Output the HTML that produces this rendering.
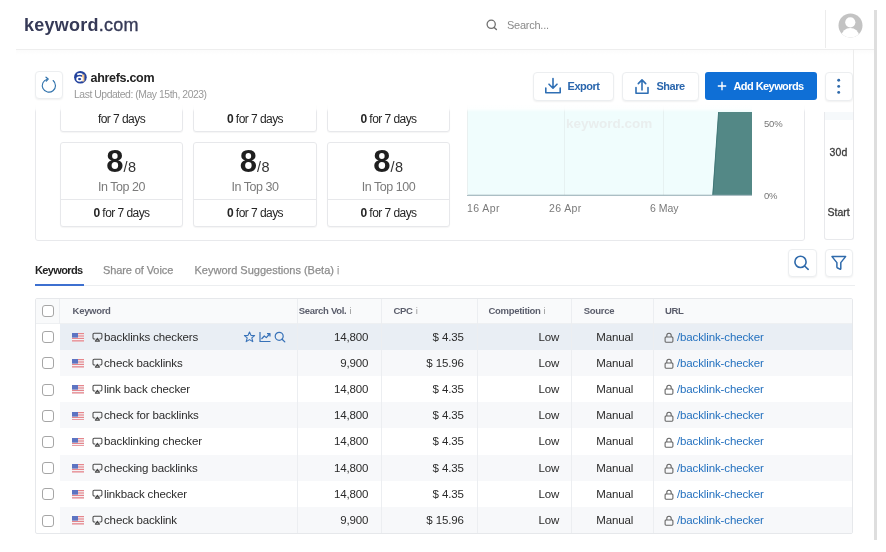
<!DOCTYPE html>
<html><head><meta charset="utf-8">
<style>
*{box-sizing:border-box;margin:0;padding:0}
html,body{width:886px;height:552px;overflow:hidden;background:#fff;font-family:"Liberation Sans",sans-serif;color:#333}
.a{position:absolute}
.t{position:absolute;white-space:nowrap;line-height:1}
/* header */
#logo{left:24px;top:16px;font-size:18px;color:#363a57;letter-spacing:0.25px}
#logo b{font-weight:700}
#logo span{-webkit-text-stroke:0.35px #363a57}
#search{left:507px;top:20px;font-size:11px;color:#8a8a8a;letter-spacing:-0.25px}
/* cards */
.card{position:absolute;width:123px;border:1px solid #e7e8eb;border-radius:3px;background:#fff;box-shadow:0 1px 1px rgba(0,0,0,0.04)}
.card .top{position:absolute;left:0;right:0;top:0;height:57px;border-bottom:1px solid #e7e8eb}
.big{position:absolute;left:0;right:0;text-align:center;top:3px;white-space:nowrap;line-height:1}
.big b{font-size:31px;font-weight:700;color:#1f1f1f}
.big span{font-size:14.5px;color:#333;letter-spacing:0.6px}
.lbl{position:absolute;left:0;right:0;top:37.5px;text-align:center;font-size:12.5px;color:#7b7b7b;letter-spacing:-0.45px;line-height:1}
.days{position:absolute;left:0;right:0;text-align:center;font-size:12px;color:#262626;letter-spacing:-0.55px;line-height:1}
.days b{font-weight:700}
.btn{position:absolute;border:1px solid #eceef0;border-radius:4px;background:#fff;box-shadow:0 1px 2px rgba(0,0,0,0.06)}
.th{position:absolute;top:0;height:25px;font-size:9.5px;font-weight:700;color:#5a5d6b;line-height:24px;white-space:nowrap;letter-spacing:-0.3px}
.th i{font-style:normal;font-weight:400;color:#9a9a9a;margin-left:3px}
.row{position:absolute;left:0;width:817px;height:26px}
.cell{position:absolute;top:0;height:26px;line-height:27.5px;font-size:11.5px;color:#2b2b2b;white-space:nowrap;letter-spacing:-0.13px}
.r{text-align:right}
.cb{position:absolute;left:6px;width:12px;height:12px;border:1.3px solid #a6a6a6;border-radius:3px;background:#fff}
.url{color:#2471bf}
.vd{position:absolute;top:0;width:1px;background:#eceef1}
</style></head><body><div id="wrap" style="position:absolute;left:0;top:0;width:886px;height:552px;overflow:hidden;filter:blur(0.35px)">

<!-- HEADER -->
<div class="t" id="logo"><b>keyword</b><span>.com</span></div>
<svg class="a" style="left:486px;top:19px" width="12" height="12" viewBox="0 0 12 12"><circle cx="5.2" cy="5.3" r="4.1" fill="none" stroke="#707070" stroke-width="1.3"/><path d="M8.2 8.4 L10.4 10.5" stroke="#707070" stroke-width="1.4" stroke-linecap="round"/></svg>
<div class="t" id="search">Search...</div>
<div class="a" style="left:825px;top:10px;width:1px;height:38px;background:#ececec"></div>
<svg class="a" style="left:838px;top:13px" width="25" height="25" viewBox="0 0 25 25"><defs><clipPath id="cc"><circle cx="12.5" cy="12.5" r="12"/></clipPath></defs><circle cx="12.5" cy="12.5" r="12" fill="#c3c3c3"/><g clip-path="url(#cc)" fill="#fff"><circle cx="12.3" cy="9.3" r="5.1"/><ellipse cx="12.3" cy="22.5" rx="8.6" ry="7.6"/></g></svg>
<div class="a" style="left:16px;top:49px;width:860px;height:6px;background:linear-gradient(#fbfbfb,#fff)"></div>
<div class="a" style="left:16px;top:48.5px;width:860px;height:1px;background:#eeeeee"></div>
<div class="a" style="left:874px;top:10px;width:3px;height:530px;background:#dedede"></div>

<!-- CONTENT (scrolled, clipped at y=111) -->
<div class="a" style="left:0;top:104px;width:872px;height:448px;overflow:hidden">
 <div class="a" style="left:0;top:-104px;width:872px;height:552px">
  <!-- stats container -->
  <div class="a" style="left:35px;top:40px;width:770px;height:200.5px;border:1px solid #e8e9ec;border-radius:3px"></div>
  <!-- row 1 cards (partially hidden) -->
  <div class="card" style="left:60px;top:76px;height:56px"><div class="days" style="top:36px"> for 7 days</div></div>
  <div class="card" style="left:193px;width:124px;top:76px;height:56px"><div class="days" style="top:36px"><b>0</b> for 7 days</div></div>
  <div class="card" style="left:327px;top:76px;height:56px"><div class="days" style="top:36px"><b>0</b> for 7 days</div></div>
  <!-- row 2 cards -->
  <div class="card" style="left:60px;top:142px;height:85px"><div class="top"><div class="big"><b>8</b><span>/8</span></div><div class="lbl">In Top 20</div></div><div class="days" style="top:64px"><b>0</b> for 7 days</div></div>
  <div class="card" style="left:193px;width:124px;top:142px;height:85px"><div class="top"><div class="big"><b>8</b><span>/8</span></div><div class="lbl">In Top 30</div></div><div class="days" style="top:64px"><b>0</b> for 7 days</div></div>
  <div class="card" style="left:327px;top:142px;height:85px"><div class="top"><div class="big"><b>8</b><span>/8</span></div><div class="lbl">In Top 100</div></div><div class="days" style="top:64px"><b>0</b> for 7 days</div></div>

  <!-- chart -->
  <div class="a" style="left:467px;top:100px;width:285px;height:95px;background:#f0fdfd"></div>
  <div class="a" style="left:564px;top:100px;width:1px;height:95px;background:#e6f1f1"></div>
  <div class="a" style="left:663px;top:100px;width:1px;height:95px;background:#e6f1f1"></div>
  <div class="t" style="left:566px;top:117px;font-size:13.5px;font-weight:700;color:#e9eeee;letter-spacing:0px">keyword.com</div>
  <svg class="a" style="left:467px;top:100px" width="286" height="97" viewBox="0 0 286 97"><path d="M245.5 95 L251.5 12 L285 12 L285 95 Z" fill="#538886"/><path d="M245.8 95 L251.6 12" stroke="#3b7373" stroke-width="0.9"/><path d="M0 95.3 H285" stroke="#8fa9b1" stroke-width="1.1"/><path d="M0.5 0 V95" stroke="#e9f0f0" stroke-width="1"/></svg>
  <div class="t" style="left:467px;top:203px;font-size:10.5px;color:#7a7a7a;letter-spacing:0.45px">16 Apr</div>
  <div class="t" style="left:549px;top:203px;font-size:10.5px;color:#7a7a7a;letter-spacing:0.4px">26 Apr</div>
  <div class="t" style="left:650px;top:203px;font-size:10.5px;color:#7a7a7a;letter-spacing:0px">6 May</div>
  <div class="t" style="left:764px;top:119px;font-size:9.5px;color:#777;letter-spacing:-0.2px">50%</div>
  <div class="t" style="left:764px;top:191px;font-size:9.5px;color:#777;letter-spacing:-0.4px">0%</div>

  <!-- right period panel -->
  <div class="a" style="left:824px;top:112px;width:30px;height:128px;border:1px solid #e8e9ec;border-top:none;border-radius:0 0 3px 3px"></div>
  <div class="a" style="left:853px;top:49px;width:1px;height:63px;background:#e8e9ec"></div>
  <div class="a" style="left:825px;top:112px;width:28px;height:8px;background:#f6f9fb"></div>
  <div class="t" style="left:829.5px;top:147px;font-size:10.5px;color:#3c3c3c;letter-spacing:0.15px;-webkit-text-stroke:0.3px #3c3c3c">30d</div>
  <div class="t" style="left:827.5px;top:207px;font-size:10.5px;color:#3c3c3c;letter-spacing:0px;-webkit-text-stroke:0.3px #3c3c3c">Start</div>

  <!-- tabs -->
  <div class="t" style="left:35px;top:265px;font-size:11px;font-weight:700;color:#222;letter-spacing:-0.62px">Keywords</div>
  <div class="t" style="left:103px;top:265px;font-size:11px;color:#8d8d8d;letter-spacing:-0.1px;-webkit-text-stroke:0.25px #8d8d8d">Share of Voice</div>
  <div class="t" style="left:194.5px;top:265px;font-size:11px;color:#8d8d8d;letter-spacing:0px;-webkit-text-stroke:0.25px #8d8d8d">Keyword Suggestions (Beta) <span style="color:#bbb">i</span></div>
  <div class="a" style="left:35px;top:285px;width:820px;height:1px;background:#eceef0"></div>
  <div class="a" style="left:35px;top:284px;width:48.5px;height:2px;background:#3d70d0"></div>
  <div class="btn" style="left:788px;top:248.5px;width:28.5px;height:28.5px"></div>
  <svg class="a" style="left:793px;top:254px" width="17" height="17" viewBox="0 0 17 17"><circle cx="7.5" cy="7.9" r="5.6" fill="none" stroke="#2f6aab" stroke-width="1.6"/><path d="M11.6 12 L15.2 15.3" stroke="#2f6aab" stroke-width="1.6" stroke-linecap="round"/></svg>
  <div class="btn" style="left:824.5px;top:248.5px;width:28.5px;height:28.5px"></div>
  <svg class="a" style="left:830px;top:255px" width="18" height="16" viewBox="0 0 18 16"><path d="M2 1.6 H15.6 L10.8 7.6 V13.6 Q10.8 14.4 10 14.2 L7.6 13 Q6.9 12.7 6.9 11.9 V7.6 Z" fill="none" stroke="#2f6aab" stroke-width="1.5" stroke-linejoin="round"/></svg>

  <!-- table -->
  <div class="a" id="tbl" style="left:35px;top:298px;width:818px;height:235.5px;border:1px solid #e6e8eb;border-radius:2px;overflow:hidden;background:#fff"><!--TBL-->
<div class="a" style="left:0;top:0;width:100%;height:24.5px;background:#f9fafb;border-bottom:1px solid #eef0f2"></div>
<div class="cb" style="left:5.5px;top:6.0px"></div>
<div class="th" style="left:36.6px">Keyword</div>
<div class="th" style="left:262.7px">Search Vol.<i>i</i></div>
<div class="th" style="left:357.5px">CPC<i>i</i></div>
<div class="th" style="left:452.5px">Competition<i>i</i></div>
<div class="th" style="left:547.8px">Source</div>
<div class="th" style="left:629.0px">URL</div>
<div class="a" style="left:23.5px;right:0;top:24.5px;height:26.2px;background:#e9eef4"></div>
<div class="cb" style="left:5.5px;top:32.1px"></div>
<svg class="a" style="left:36.2px;top:34.0px" width="12" height="8.5" viewBox="0 0 12 8.5"><rect width="12" height="8.5" fill="#f3f3f6"/><rect y="0" width="12" height="1.2" fill="#e6868c"/><rect y="2.4" width="12" height="1.2" fill="#e6868c"/><rect y="4.8" width="12" height="1.2" fill="#e6868c"/><rect y="7.2" width="12" height="1.3" fill="#e6868c"/><rect width="6" height="4.6" fill="#5d74c2"/></svg>
<svg class="a" style="left:55.6px;top:33.0px" width="11" height="10" viewBox="0 0 11 10"><path d="M3.3 6.9 H2.2 A1.2 1.2 0 0 1 1 5.7 V2.4 A1.2 1.2 0 0 1 2.2 1.2 H8.7 A1.2 1.2 0 0 1 9.9 2.4 V5.7 A1.2 1.2 0 0 1 8.7 6.9 H7.5" fill="none" stroke="#4a4a4a" stroke-width="1.05"/><path d="M5.4 6.2 L7.5 9.1 H3.3 Z" fill="none" stroke="#4a4a4a" stroke-width="1.05" stroke-linejoin="round"/></svg>
<div class="cell" style="left:68.0px;top:24.5px;height:26.2px">backlinks checkers</div>
<div class="cell r" style="left:264.0px;width:68.39999999999998px;top:24.5px;height:26.2px">14,800</div>
<div class="cell r" style="left:354.0px;width:73.80000000000001px;top:24.5px;height:26.2px">$ 4.35</div>
<div class="cell r" style="left:464.0px;width:59.200000000000045px;top:24.5px;height:26.2px">Low</div>
<div class="cell" style="left:560.2px;top:24.5px;height:26.2px">Manual</div>
<svg class="a" style="left:627.5px;top:33.0px" width="10" height="11" viewBox="0 0 10 11"><path d="M2.8 5 V3.5 A2.2 2.2 0 0 1 7.2 3.5 V5" fill="none" stroke="#666" stroke-width="1.1"/><rect x="1.1" y="5" width="7.8" height="5.2" rx="0.9" fill="none" stroke="#666" stroke-width="1.1"/></svg>
<div class="cell url" style="left:641.0px;top:24.5px;height:26.2px">/backlink-checker</div>
<svg class="a" style="left:206.5px;top:32.4px" width="44" height="12" viewBox="0 0 44 12"><path d="M6.5 1 L8 4.4 L11.6 4.6 L8.8 6.9 L9.8 10.6 L6.5 8.6 L3.2 10.6 L4.2 6.9 L1.4 4.6 L5 4.4 Z" fill="none" stroke="#3872b8" stroke-width="1.1" stroke-linejoin="round"/><path d="M17 1 V10.5 H27.5" fill="none" stroke="#3872b8" stroke-width="1.2"/><path d="M18.5 8 L21.3 5 L23.3 6.6 L26.6 3 M24 2.6 H27 V5.6" fill="none" stroke="#3872b8" stroke-width="1.2" stroke-linejoin="round"/><circle cx="36.2" cy="5.3" r="4" fill="none" stroke="#3872b8" stroke-width="1.2"/><path d="M39.1 8.2 L41.8 10.9" stroke="#3872b8" stroke-width="1.3" stroke-linecap="round"/></svg>
<div class="a" style="left:23.5px;right:0;top:50.7px;height:26.2px;background:#f7f8fa"></div>
<div class="cb" style="left:5.5px;top:58.3px"></div>
<svg class="a" style="left:36.2px;top:60.2px" width="12" height="8.5" viewBox="0 0 12 8.5"><rect width="12" height="8.5" fill="#f3f3f6"/><rect y="0" width="12" height="1.2" fill="#e6868c"/><rect y="2.4" width="12" height="1.2" fill="#e6868c"/><rect y="4.8" width="12" height="1.2" fill="#e6868c"/><rect y="7.2" width="12" height="1.3" fill="#e6868c"/><rect width="6" height="4.6" fill="#5d74c2"/></svg>
<svg class="a" style="left:55.6px;top:59.2px" width="11" height="10" viewBox="0 0 11 10"><path d="M3.3 6.9 H2.2 A1.2 1.2 0 0 1 1 5.7 V2.4 A1.2 1.2 0 0 1 2.2 1.2 H8.7 A1.2 1.2 0 0 1 9.9 2.4 V5.7 A1.2 1.2 0 0 1 8.7 6.9 H7.5" fill="none" stroke="#4a4a4a" stroke-width="1.05"/><path d="M5.4 6.2 L7.5 9.1 H3.3 Z" fill="none" stroke="#4a4a4a" stroke-width="1.05" stroke-linejoin="round"/></svg>
<div class="cell" style="left:68.0px;top:50.7px;height:26.2px">check backlinks</div>
<div class="cell r" style="left:264.0px;width:68.39999999999998px;top:50.7px;height:26.2px">9,900</div>
<div class="cell r" style="left:354.0px;width:73.80000000000001px;top:50.7px;height:26.2px">$ 15.96</div>
<div class="cell r" style="left:464.0px;width:59.200000000000045px;top:50.7px;height:26.2px">Low</div>
<div class="cell" style="left:560.2px;top:50.7px;height:26.2px">Manual</div>
<svg class="a" style="left:627.5px;top:59.2px" width="10" height="11" viewBox="0 0 10 11"><path d="M2.8 5 V3.5 A2.2 2.2 0 0 1 7.2 3.5 V5" fill="none" stroke="#666" stroke-width="1.1"/><rect x="1.1" y="5" width="7.8" height="5.2" rx="0.9" fill="none" stroke="#666" stroke-width="1.1"/></svg>
<div class="cell url" style="left:641.0px;top:50.7px;height:26.2px">/backlink-checker</div>
<div class="a" style="left:23.5px;right:0;top:76.9px;height:26.2px;background:#fff"></div>
<div class="cb" style="left:5.5px;top:84.5px"></div>
<svg class="a" style="left:36.2px;top:86.4px" width="12" height="8.5" viewBox="0 0 12 8.5"><rect width="12" height="8.5" fill="#f3f3f6"/><rect y="0" width="12" height="1.2" fill="#e6868c"/><rect y="2.4" width="12" height="1.2" fill="#e6868c"/><rect y="4.8" width="12" height="1.2" fill="#e6868c"/><rect y="7.2" width="12" height="1.3" fill="#e6868c"/><rect width="6" height="4.6" fill="#5d74c2"/></svg>
<svg class="a" style="left:55.6px;top:85.4px" width="11" height="10" viewBox="0 0 11 10"><path d="M3.3 6.9 H2.2 A1.2 1.2 0 0 1 1 5.7 V2.4 A1.2 1.2 0 0 1 2.2 1.2 H8.7 A1.2 1.2 0 0 1 9.9 2.4 V5.7 A1.2 1.2 0 0 1 8.7 6.9 H7.5" fill="none" stroke="#4a4a4a" stroke-width="1.05"/><path d="M5.4 6.2 L7.5 9.1 H3.3 Z" fill="none" stroke="#4a4a4a" stroke-width="1.05" stroke-linejoin="round"/></svg>
<div class="cell" style="left:68.0px;top:76.9px;height:26.2px">link back checker</div>
<div class="cell r" style="left:264.0px;width:68.39999999999998px;top:76.9px;height:26.2px">14,800</div>
<div class="cell r" style="left:354.0px;width:73.80000000000001px;top:76.9px;height:26.2px">$ 4.35</div>
<div class="cell r" style="left:464.0px;width:59.200000000000045px;top:76.9px;height:26.2px">Low</div>
<div class="cell" style="left:560.2px;top:76.9px;height:26.2px">Manual</div>
<svg class="a" style="left:627.5px;top:85.4px" width="10" height="11" viewBox="0 0 10 11"><path d="M2.8 5 V3.5 A2.2 2.2 0 0 1 7.2 3.5 V5" fill="none" stroke="#666" stroke-width="1.1"/><rect x="1.1" y="5" width="7.8" height="5.2" rx="0.9" fill="none" stroke="#666" stroke-width="1.1"/></svg>
<div class="cell url" style="left:641.0px;top:76.9px;height:26.2px">/backlink-checker</div>
<div class="a" style="left:23.5px;right:0;top:103.1px;height:26.2px;background:#f7f8fa"></div>
<div class="cb" style="left:5.5px;top:110.7px"></div>
<svg class="a" style="left:36.2px;top:112.6px" width="12" height="8.5" viewBox="0 0 12 8.5"><rect width="12" height="8.5" fill="#f3f3f6"/><rect y="0" width="12" height="1.2" fill="#e6868c"/><rect y="2.4" width="12" height="1.2" fill="#e6868c"/><rect y="4.8" width="12" height="1.2" fill="#e6868c"/><rect y="7.2" width="12" height="1.3" fill="#e6868c"/><rect width="6" height="4.6" fill="#5d74c2"/></svg>
<svg class="a" style="left:55.6px;top:111.6px" width="11" height="10" viewBox="0 0 11 10"><path d="M3.3 6.9 H2.2 A1.2 1.2 0 0 1 1 5.7 V2.4 A1.2 1.2 0 0 1 2.2 1.2 H8.7 A1.2 1.2 0 0 1 9.9 2.4 V5.7 A1.2 1.2 0 0 1 8.7 6.9 H7.5" fill="none" stroke="#4a4a4a" stroke-width="1.05"/><path d="M5.4 6.2 L7.5 9.1 H3.3 Z" fill="none" stroke="#4a4a4a" stroke-width="1.05" stroke-linejoin="round"/></svg>
<div class="cell" style="left:68.0px;top:103.1px;height:26.2px">check for backlinks</div>
<div class="cell r" style="left:264.0px;width:68.39999999999998px;top:103.1px;height:26.2px">14,800</div>
<div class="cell r" style="left:354.0px;width:73.80000000000001px;top:103.1px;height:26.2px">$ 4.35</div>
<div class="cell r" style="left:464.0px;width:59.200000000000045px;top:103.1px;height:26.2px">Low</div>
<div class="cell" style="left:560.2px;top:103.1px;height:26.2px">Manual</div>
<svg class="a" style="left:627.5px;top:111.6px" width="10" height="11" viewBox="0 0 10 11"><path d="M2.8 5 V3.5 A2.2 2.2 0 0 1 7.2 3.5 V5" fill="none" stroke="#666" stroke-width="1.1"/><rect x="1.1" y="5" width="7.8" height="5.2" rx="0.9" fill="none" stroke="#666" stroke-width="1.1"/></svg>
<div class="cell url" style="left:641.0px;top:103.1px;height:26.2px">/backlink-checker</div>
<div class="a" style="left:23.5px;right:0;top:129.3px;height:26.2px;background:#fff"></div>
<div class="cb" style="left:5.5px;top:136.9px"></div>
<svg class="a" style="left:36.2px;top:138.8px" width="12" height="8.5" viewBox="0 0 12 8.5"><rect width="12" height="8.5" fill="#f3f3f6"/><rect y="0" width="12" height="1.2" fill="#e6868c"/><rect y="2.4" width="12" height="1.2" fill="#e6868c"/><rect y="4.8" width="12" height="1.2" fill="#e6868c"/><rect y="7.2" width="12" height="1.3" fill="#e6868c"/><rect width="6" height="4.6" fill="#5d74c2"/></svg>
<svg class="a" style="left:55.6px;top:137.8px" width="11" height="10" viewBox="0 0 11 10"><path d="M3.3 6.9 H2.2 A1.2 1.2 0 0 1 1 5.7 V2.4 A1.2 1.2 0 0 1 2.2 1.2 H8.7 A1.2 1.2 0 0 1 9.9 2.4 V5.7 A1.2 1.2 0 0 1 8.7 6.9 H7.5" fill="none" stroke="#4a4a4a" stroke-width="1.05"/><path d="M5.4 6.2 L7.5 9.1 H3.3 Z" fill="none" stroke="#4a4a4a" stroke-width="1.05" stroke-linejoin="round"/></svg>
<div class="cell" style="left:68.0px;top:129.3px;height:26.2px">backlinking checker</div>
<div class="cell r" style="left:264.0px;width:68.39999999999998px;top:129.3px;height:26.2px">14,800</div>
<div class="cell r" style="left:354.0px;width:73.80000000000001px;top:129.3px;height:26.2px">$ 4.35</div>
<div class="cell r" style="left:464.0px;width:59.200000000000045px;top:129.3px;height:26.2px">Low</div>
<div class="cell" style="left:560.2px;top:129.3px;height:26.2px">Manual</div>
<svg class="a" style="left:627.5px;top:137.8px" width="10" height="11" viewBox="0 0 10 11"><path d="M2.8 5 V3.5 A2.2 2.2 0 0 1 7.2 3.5 V5" fill="none" stroke="#666" stroke-width="1.1"/><rect x="1.1" y="5" width="7.8" height="5.2" rx="0.9" fill="none" stroke="#666" stroke-width="1.1"/></svg>
<div class="cell url" style="left:641.0px;top:129.3px;height:26.2px">/backlink-checker</div>
<div class="a" style="left:23.5px;right:0;top:155.5px;height:26.2px;background:#f7f8fa"></div>
<div class="cb" style="left:5.5px;top:163.1px"></div>
<svg class="a" style="left:36.2px;top:165.0px" width="12" height="8.5" viewBox="0 0 12 8.5"><rect width="12" height="8.5" fill="#f3f3f6"/><rect y="0" width="12" height="1.2" fill="#e6868c"/><rect y="2.4" width="12" height="1.2" fill="#e6868c"/><rect y="4.8" width="12" height="1.2" fill="#e6868c"/><rect y="7.2" width="12" height="1.3" fill="#e6868c"/><rect width="6" height="4.6" fill="#5d74c2"/></svg>
<svg class="a" style="left:55.6px;top:164.0px" width="11" height="10" viewBox="0 0 11 10"><path d="M3.3 6.9 H2.2 A1.2 1.2 0 0 1 1 5.7 V2.4 A1.2 1.2 0 0 1 2.2 1.2 H8.7 A1.2 1.2 0 0 1 9.9 2.4 V5.7 A1.2 1.2 0 0 1 8.7 6.9 H7.5" fill="none" stroke="#4a4a4a" stroke-width="1.05"/><path d="M5.4 6.2 L7.5 9.1 H3.3 Z" fill="none" stroke="#4a4a4a" stroke-width="1.05" stroke-linejoin="round"/></svg>
<div class="cell" style="left:68.0px;top:155.5px;height:26.2px">checking backlinks</div>
<div class="cell r" style="left:264.0px;width:68.39999999999998px;top:155.5px;height:26.2px">14,800</div>
<div class="cell r" style="left:354.0px;width:73.80000000000001px;top:155.5px;height:26.2px">$ 4.35</div>
<div class="cell r" style="left:464.0px;width:59.200000000000045px;top:155.5px;height:26.2px">Low</div>
<div class="cell" style="left:560.2px;top:155.5px;height:26.2px">Manual</div>
<svg class="a" style="left:627.5px;top:164.0px" width="10" height="11" viewBox="0 0 10 11"><path d="M2.8 5 V3.5 A2.2 2.2 0 0 1 7.2 3.5 V5" fill="none" stroke="#666" stroke-width="1.1"/><rect x="1.1" y="5" width="7.8" height="5.2" rx="0.9" fill="none" stroke="#666" stroke-width="1.1"/></svg>
<div class="cell url" style="left:641.0px;top:155.5px;height:26.2px">/backlink-checker</div>
<div class="a" style="left:23.5px;right:0;top:181.7px;height:26.2px;background:#fff"></div>
<div class="cb" style="left:5.5px;top:189.3px"></div>
<svg class="a" style="left:36.2px;top:191.2px" width="12" height="8.5" viewBox="0 0 12 8.5"><rect width="12" height="8.5" fill="#f3f3f6"/><rect y="0" width="12" height="1.2" fill="#e6868c"/><rect y="2.4" width="12" height="1.2" fill="#e6868c"/><rect y="4.8" width="12" height="1.2" fill="#e6868c"/><rect y="7.2" width="12" height="1.3" fill="#e6868c"/><rect width="6" height="4.6" fill="#5d74c2"/></svg>
<svg class="a" style="left:55.6px;top:190.2px" width="11" height="10" viewBox="0 0 11 10"><path d="M3.3 6.9 H2.2 A1.2 1.2 0 0 1 1 5.7 V2.4 A1.2 1.2 0 0 1 2.2 1.2 H8.7 A1.2 1.2 0 0 1 9.9 2.4 V5.7 A1.2 1.2 0 0 1 8.7 6.9 H7.5" fill="none" stroke="#4a4a4a" stroke-width="1.05"/><path d="M5.4 6.2 L7.5 9.1 H3.3 Z" fill="none" stroke="#4a4a4a" stroke-width="1.05" stroke-linejoin="round"/></svg>
<div class="cell" style="left:68.0px;top:181.7px;height:26.2px">linkback checker</div>
<div class="cell r" style="left:264.0px;width:68.39999999999998px;top:181.7px;height:26.2px">14,800</div>
<div class="cell r" style="left:354.0px;width:73.80000000000001px;top:181.7px;height:26.2px">$ 4.35</div>
<div class="cell r" style="left:464.0px;width:59.200000000000045px;top:181.7px;height:26.2px">Low</div>
<div class="cell" style="left:560.2px;top:181.7px;height:26.2px">Manual</div>
<svg class="a" style="left:627.5px;top:190.2px" width="10" height="11" viewBox="0 0 10 11"><path d="M2.8 5 V3.5 A2.2 2.2 0 0 1 7.2 3.5 V5" fill="none" stroke="#666" stroke-width="1.1"/><rect x="1.1" y="5" width="7.8" height="5.2" rx="0.9" fill="none" stroke="#666" stroke-width="1.1"/></svg>
<div class="cell url" style="left:641.0px;top:181.7px;height:26.2px">/backlink-checker</div>
<div class="a" style="left:23.5px;right:0;top:207.9px;height:26.2px;background:#f7f8fa"></div>
<div class="cb" style="left:5.5px;top:215.5px"></div>
<svg class="a" style="left:36.2px;top:217.4px" width="12" height="8.5" viewBox="0 0 12 8.5"><rect width="12" height="8.5" fill="#f3f3f6"/><rect y="0" width="12" height="1.2" fill="#e6868c"/><rect y="2.4" width="12" height="1.2" fill="#e6868c"/><rect y="4.8" width="12" height="1.2" fill="#e6868c"/><rect y="7.2" width="12" height="1.3" fill="#e6868c"/><rect width="6" height="4.6" fill="#5d74c2"/></svg>
<svg class="a" style="left:55.6px;top:216.4px" width="11" height="10" viewBox="0 0 11 10"><path d="M3.3 6.9 H2.2 A1.2 1.2 0 0 1 1 5.7 V2.4 A1.2 1.2 0 0 1 2.2 1.2 H8.7 A1.2 1.2 0 0 1 9.9 2.4 V5.7 A1.2 1.2 0 0 1 8.7 6.9 H7.5" fill="none" stroke="#4a4a4a" stroke-width="1.05"/><path d="M5.4 6.2 L7.5 9.1 H3.3 Z" fill="none" stroke="#4a4a4a" stroke-width="1.05" stroke-linejoin="round"/></svg>
<div class="cell" style="left:68.0px;top:207.9px;height:26.2px">check backlink</div>
<div class="cell r" style="left:264.0px;width:68.39999999999998px;top:207.9px;height:26.2px">9,900</div>
<div class="cell r" style="left:354.0px;width:73.80000000000001px;top:207.9px;height:26.2px">$ 15.96</div>
<div class="cell r" style="left:464.0px;width:59.200000000000045px;top:207.9px;height:26.2px">Low</div>
<div class="cell" style="left:560.2px;top:207.9px;height:26.2px">Manual</div>
<svg class="a" style="left:627.5px;top:216.4px" width="10" height="11" viewBox="0 0 10 11"><path d="M2.8 5 V3.5 A2.2 2.2 0 0 1 7.2 3.5 V5" fill="none" stroke="#666" stroke-width="1.1"/><rect x="1.1" y="5" width="7.8" height="5.2" rx="0.9" fill="none" stroke="#666" stroke-width="1.1"/></svg>
<div class="cell url" style="left:641.0px;top:207.9px;height:26.2px">/backlink-checker</div>
<div class="vd" style="left:261.0px;height:100%"></div>
<div class="vd" style="left:344.6px;height:100%"></div>
<div class="vd" style="left:440.5px;height:100%"></div>
<div class="vd" style="left:535.4px;height:100%"></div>
<div class="vd" style="left:616.6px;height:100%"></div>
<div class="vd" style="left:23.3px;height:24.5px"></div>
<!--/TBL--></div>
 </div>
</div>

<div class="a" style="left:0;top:104px;width:872px;height:8px;background:linear-gradient(rgba(255,255,255,1),rgba(255,255,255,0.88) 60%,rgba(255,255,255,0))"></div>
<!-- TOOLBAR -->
<div class="btn" style="left:35px;top:71px;width:28px;height:28px"></div>
<svg class="a" style="left:38px;top:74px" width="22" height="22" viewBox="0 0 22 22"><path d="M15.1 6.5 A6.6 6.6 0 1 1 9.2 5.2" fill="none" stroke="#3072ac" stroke-width="1.15" stroke-linecap="round"/><path d="M8 3.2 L10.2 5 L8.3 7.2" fill="none" stroke="#3072ac" stroke-width="1.2" stroke-linecap="round" stroke-linejoin="round"/></svg>
<svg class="a" style="left:73.8px;top:71px" width="13" height="13" viewBox="0 0 13 13"><circle cx="6.4" cy="6.3" r="6.3" fill="#22429e"/><path d="M3.2 3.4 Q6 2.2 8.6 3.6" fill="none" stroke="#fff" stroke-width="1.6"/><rect x="8" y="3.5" width="2.4" height="7" fill="#f1c592"/><ellipse cx="5.6" cy="8.1" rx="2.5" ry="1.9" fill="none" stroke="#fff" stroke-width="1.7"/></svg>
<div class="t" style="left:90.5px;top:71.5px;font-size:12.5px;font-weight:700;color:#222;letter-spacing:-0.29px">ahrefs.com</div>
<div class="t" style="left:74px;top:90px;font-size:10.4px;color:#999;letter-spacing:-0.45px">Last Updated: (May 15th, 2023)</div>

<div class="btn" style="left:533px;top:71.5px;width:80.5px;height:29px"></div>
<svg class="a" style="left:544px;top:77px" width="18" height="18" viewBox="0 0 18 18"><path d="M9 1.5 V11 M5 7.2 L9 11.2 L13 7.2" fill="none" stroke="#2f6fb4" stroke-width="1.6" stroke-linecap="round" stroke-linejoin="round"/><path d="M1.8 11 V15.8 H16.2 V11" fill="none" stroke="#2f6fb4" stroke-width="1.6" stroke-linecap="round" stroke-linejoin="round"/></svg>
<div class="t" style="left:567.5px;top:81px;font-size:11px;font-weight:700;color:#2a66ad;letter-spacing:-0.46px">Export</div>
<div class="btn" style="left:621.5px;top:71.5px;width:77px;height:29px"></div>
<svg class="a" style="left:634px;top:78px" width="16" height="17" viewBox="0 0 16 17"><path d="M8 12 V2 M4.3 5.6 L8 1.9 L11.7 5.6" fill="none" stroke="#2f6fb4" stroke-width="1.6" stroke-linecap="round" stroke-linejoin="round"/><path d="M2 9.5 V15.3 H14 V9.5" fill="none" stroke="#2f6fb4" stroke-width="1.6" stroke-linecap="round" stroke-linejoin="round"/></svg>
<div class="t" style="left:656.5px;top:81px;font-size:11px;font-weight:700;color:#2a66ad;letter-spacing:-0.5px">Share</div>
<div class="a" style="left:705px;top:72px;width:112px;height:28px;background:#0f6fd6;border-radius:3px"></div>
<svg class="a" style="left:717px;top:81px" width="10" height="10" viewBox="0 0 10 10"><path d="M5 0.8 V9.2 M0.8 5 H9.2" stroke="#fff" stroke-width="1.4"/></svg>
<div class="t" style="left:733.5px;top:81px;font-size:11px;font-weight:700;color:#fff;letter-spacing:-0.57px">Add Keywords</div>
<div class="btn" style="left:825px;top:72px;width:28px;height:28.5px"></div>
<svg class="a" style="left:835px;top:76px" width="8" height="20" viewBox="0 0 8 20"><circle cx="3.7" cy="4.2" r="1.45" fill="#2f6aab"/><circle cx="3.7" cy="10.4" r="1.45" fill="#2f6aab"/><circle cx="3.7" cy="16.4" r="1.45" fill="#2f6aab"/></svg>
<div class="a" style="left:853px;top:49px;width:1px;height:62px;background:#ececec"></div>

</div></body></html>
